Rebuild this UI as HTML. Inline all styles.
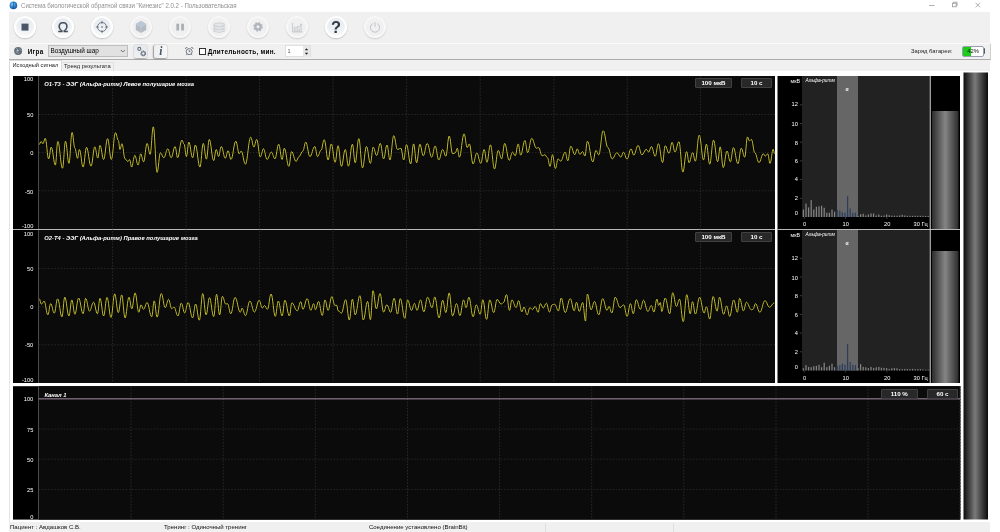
<!DOCTYPE html>
<html lang="ru"><head><meta charset="utf-8"><title>Кинезис</title>
<style>
*{box-sizing:border-box;margin:0;padding:0}
html,body{width:1000px;height:532px;overflow:hidden;background:#fff}
body{position:relative;font-family:"Liberation Sans","DejaVu Sans",sans-serif;font-size:6px;color:#000}
.abs{position:absolute}
#win{position:absolute;left:9px;top:0;width:981px;height:532px;background:#fff}
#title{position:absolute;left:20.8px;top:1.5px;font-size:6.6px;color:#909090;white-space:nowrap;transform:scaleX(.925);transform-origin:0 0}
#tb1{position:absolute;left:9px;top:12px;width:981px;height:31px;background:#f0f0f0}
#tb2{position:absolute;left:9px;top:42.5px;width:982px;height:17px;background:#f0f0f0;border-top:1px solid #fafafa;border-bottom:1px solid #adadad;border-right:1px solid #cfcfcf}
#tabs{position:absolute;left:9px;top:60px;width:981px;height:11px;background:#f0f0f0}
#status{position:absolute;left:9px;top:522px;width:981px;height:10px;background:#f0f0f0}
.rb{position:absolute;top:15.7px;width:22px;height:22px;border-radius:50%;background:linear-gradient(180deg,#e4e8ed 0%,#edf0f3 50%,#f8f9fa 100%);box-shadow:inset 0 0 1.2px 2.1px #fff,0 .9px 1.6px rgba(0,0,0,.2),0 0 .8px rgba(0,0,0,.08)}
.rb.dis{background:#f0f0f0;box-shadow:inset 0 0 1px 1.8px #f8f8f8,0 .9px 1.6px rgba(0,0,0,.15),0 0 .8px rgba(0,0,0,.06)}
.rb svg{position:absolute;left:0;top:0}
.t{position:absolute;white-space:nowrap}
.lab{position:absolute;color:#fff;font-size:5.7px;text-align:right;white-space:nowrap}
.ctitle{position:absolute;color:#fff;font-size:5.85px;font-style:italic;font-weight:bold;white-space:nowrap}
.btn{position:absolute;background:#282828;border:1px solid #414141;border-radius:1px;color:#fff;font-size:6.2px;font-weight:bold;text-align:center;line-height:8.2px;height:10px;white-space:nowrap}
svg{display:block}
</style></head><body><div id="root" style="position:absolute;left:0;top:0;width:1000px;height:532px;will-change:transform;transform:translateZ(0)">
<div id="win"></div>
<!-- title bar -->
<svg class="abs" style="left:9.4px;top:1.3px" width="9" height="9" viewBox="0 0 9 9"><defs><radialGradient id="ig" cx=".4" cy=".35" r=".7"><stop offset="0" stop-color="#8fd0f5"/><stop offset=".5" stop-color="#2f86d2"/><stop offset="1" stop-color="#17509c"/></radialGradient></defs><circle cx="4.4" cy="4.4" r="3.8" fill="url(#ig)"/><path d="M4.4 .8v7.2" stroke="#1c4f8e" stroke-width=".7"/></svg>
<div id="title">Система биологической обратной связи "Кинезис" 2.0.2 - Пользовательская</div>
<svg class="abs" style="left:920px;top:0" width="70" height="12" viewBox="0 0 70 12"><g stroke="#8c8c8c" stroke-width=".7" fill="none"><path d="M9 5.5h5.5"/><rect x="32.5" y="3.2" width="3.6" height="3.6"/><path d="M33.5 3.2v-1h3.6v3.6h-1"/><path d="M55.5 2.8l4.6 4.6M60.1 2.8l-4.6 4.6"/></g></svg>

<!-- toolbar 1 -->
<div id="tb1"></div>
<div class="rb" style="left:13.50px"><svg width="22" height="22"><rect x="7.5" y="7.6" width="7" height="7" fill="#4a5567"/></svg></div>
<div class="rb" style="left:52.45px"><svg width="22" height="22"><text x="11" y="16.2" text-anchor="middle" font-family="Liberation Sans,sans-serif" font-size="14.2" fill="#414b59" stroke="#414b59" stroke-width=".25">Ω</text></svg></div>
<div class="rb" style="left:91.40px"><svg width="22" height="22"><g stroke="#4e5866" stroke-width=".75" fill="none"><circle cx="11" cy="11" r="4.5"/><path d="M11 4.9v2.9M11 14.2v2.9M4.9 11h2.9M14.2 11h2.9"/></g><circle cx="11" cy="11" r=".8" fill="#4e5866"/></svg></div>
<div class="rb dis" style="left:130.35px"><svg width="22" height="22"><path d="M11 5l5.2 3v6L11 17l-5.2-3V8z" fill="#b3bac1"/><path d="M11 5l5.2 3L11 11 5.8 8z" fill="#b9c8d6"/><path d="M11 11v6M11 11l5.2-3M11 11L5.8 8" stroke="#cdd3d9" stroke-width=".5" fill="none"/></svg></div>
<div class="rb dis" style="left:169.30px"><svg width="22" height="22"><rect x="7.4" y="7.7" width="2.7" height="6.8" fill="#a9adb4"/><rect x="12.2" y="7.7" width="2.7" height="6.8" fill="#a9adb4"/></svg></div>
<div class="rb dis" style="left:208.25px"><svg width="22" height="22"><g stroke="#c3c7cc" stroke-width=".7" fill="#e4e6e9"><path d="M5.8 13.6l5.5-1.2 5 1v1.8l-5 1.3-5.5-1.1z"/><path d="M5.8 10.8l5.5-1.2 5 1v1.8l-5 1.3-5.5-1.1z"/><path d="M5.8 8l5.5-1.2 5 1v1.8l-5 1.3L5.8 9.8z"/></g></svg></div>
<div class="rb dis" style="left:247.20px"><svg width="22" height="22"><circle cx="11" cy="10.8" r="2.7" fill="none" stroke="#b1b5be" stroke-width="2.3"/><circle cx="11" cy="10.8" r="4" fill="none" stroke="#b1b5be" stroke-width="1.6" stroke-dasharray="1.6 1.54"/></svg></div>
<div class="rb dis" style="left:286.15px"><svg width="22" height="22"><g stroke="#b7bbc1" stroke-width=".7" fill="none"><path d="M6.5 7v9h10"/><path d="M8.3 16v-4.5M10 16v-3.2M11.7 16v-4.8M13.4 16v-3.5M15.1 16v-6"/><path d="M8.3 10.8l1.7 1.2 1.7-1.8 1.7 1 1.9-2.7"/><path d="M14 8.3l1.5-.2.2 1.5"/></g></svg></div>
<div class="rb" style="left:325.10px"><svg width="22" height="22"><text x="11" y="16.8" text-anchor="middle" font-family="Liberation Sans,sans-serif" font-weight="bold" font-size="16.4" fill="#2f3742">?</text></svg></div>
<div class="rb dis" style="left:364.05px"><svg width="22" height="22"><g stroke="#b3b6bb" stroke-width=".8" fill="none"><path d="M8.84 7.54A4.6 4.6 0 1 0 13.16 7.54"/><path d="M11 6.2v4.7"/></g></svg></div>

<!-- toolbar 2 -->
<div id="tb2"></div>
<svg class="abs" style="left:14px;top:46px" width="10" height="10"><circle cx="4.1" cy="4.9" r="4" fill="#626d7a"/><circle cx="3.6" cy="4.6" r="1" fill="#c9ced4"/><path d="M1.5 6.5l1.8-.6 1.2 1.9M5.3 2.4l1.3 1.9 1 .2M2 2.8l1.5-.8" stroke="#a3adb7" stroke-width=".7" fill="none"/></svg>
<div class="t" style="left:27.8px;top:47.7px;font-size:6.3px;font-weight:bold;letter-spacing:.3px">Игра</div>
<div class="abs" style="left:48.3px;top:45.3px;width:79.4px;height:12px;background:#e1e1e1;border:.8px solid #bdbdbd"></div>
<div class="t" style="left:50.5px;top:47.3px;font-size:6.4px">Воздушный шар</div>
<svg class="abs" style="left:120px;top:49px" width="6" height="5"><path d="M.8 1l2 2 2-2" stroke="#444" stroke-width=".7" fill="none"/></svg>
<div class="abs" style="left:133.5px;top:44.7px;width:13.2px;height:13px;border-radius:2.5px;background:linear-gradient(180deg,#e6e8ea,#f0f1f2);box-shadow:0 .6px 1.6px rgba(0,0,0,.3),0 0 1px rgba(0,0,0,.12)"></div>
<svg class="abs" style="left:133.5px;top:44.5px" width="14" height="14"><circle cx="5.3" cy="3.9" r="1.5" fill="#f4f5f6" stroke="#667283" stroke-width="1.1"/><circle cx="9.3" cy="8.5" r="2.1" fill="#f4f5f6" stroke="#667283" stroke-width="1.6" stroke-dasharray="1.2 .45"/><circle cx="9.3" cy="8.5" r="1.6" fill="none" stroke="#667283" stroke-width=".6"/></svg>
<div class="abs" style="left:153.7px;top:44.7px;width:13.1px;height:13px;border-radius:2.5px;background:linear-gradient(90deg,#eceeef,#f8f8f9);box-shadow:-.5px .7px 1.6px rgba(0,0,0,.38),0 0 1px rgba(0,0,0,.12)"></div>
<div class="t" style="left:159.2px;top:45px;font-family:'Liberation Serif',serif;font-style:italic;font-weight:bold;font-size:11.5px;color:#4a5363">i</div>
<svg class="abs" style="left:184px;top:46px" width="11" height="10"><g stroke="#59616e" stroke-width=".85" fill="none"><circle cx="5.2" cy="5.6" r="3"/><path d="M5.2 4v1.7h1.1M3 8.2l-.7.9M7.4 8.2l.7.9"/></g><path d="M1 3.2a2 2 0 0 1 2.7-2.1zM9.4 3.2a2 2 0 0 0-2.7-2.1z" fill="#59616e"/></svg>
<div class="abs" style="left:199.3px;top:48.2px;width:6.9px;height:6.5px;background:#fff;border:.7px solid #333"></div>
<div class="t" style="left:207.7px;top:47.9px;font-size:6.4px;font-weight:bold;letter-spacing:.27px">Длительность, мин.</div>
<div class="abs" style="left:285px;top:45px;width:25.5px;height:12px;background:#fff;border:1px solid #e0e0e0"></div>
<div class="t" style="left:287.5px;top:48px;font-size:5.5px;color:#555">1</div>
<svg class="abs" style="left:302.5px;top:45.5px" width="7" height="11"><rect x="0" y="0" width="7" height="11" fill="#e8e8e8"/><path d="M1.8 4.2l1.7-2 1.7 2zM1.8 6.8l1.7 2 1.7-2z" fill="#222"/></svg>
<div class="t" style="left:911px;top:47.7px;font-size:5.8px;color:#222">Заряд батареи:</div>
<div class="abs" style="left:962px;top:45.5px;width:21.5px;height:11px;border:.9px solid #98a0ae;border-radius:2px;background:linear-gradient(90deg,#1acd1a 0,#1acd1a 41%,#fff 41%)"></div>
<div class="abs" style="left:983.5px;top:48px;width:1.5px;height:5.5px;background:#4f5a6e;border-radius:0 1px 1px 0"></div>
<div class="t" style="left:967.3px;top:47.8px;font-size:5.8px;color:#111">42%</div>

<!-- tabs -->
<div id="tabs"></div>
<div class="abs" style="left:9px;top:60px;width:52.5px;height:12px;background:#fff;border:1px solid #dcdcdc;border-bottom:none"></div>
<div class="abs" style="left:61.5px;top:61.5px;width:52px;height:9.5px;border:1px solid #e0e0e0;border-left:none;border-bottom:none"></div>
<div class="t" style="left:12.5px;top:61.5px;font-size:5.7px;color:#222">Исходный сигнал</div>
<div class="t" style="left:64px;top:62.8px;font-size:5.75px;color:#222">Тренд результата</div>
<div class="abs" style="left:9px;top:71px;width:981px;height:451px;background:#fff;border-left:1px solid #e6e6e6"></div>

<!-- main chart SVG -->
<svg class="abs" style="left:0;top:0" width="1000" height="532" viewBox="0 0 1000 532">
<defs>
<linearGradient id="lv" x1="0" x2="1" y1="0" y2="0"><stop offset="0" stop-color="#2c2c2c"/><stop offset=".5" stop-color="#858585"/><stop offset="1" stop-color="#2c2c2c"/></linearGradient>
<linearGradient id="big" x1="0" x2="1" y1="0" y2="0"><stop offset="0" stop-color="#0c0c0c"/><stop offset=".47" stop-color="#7a7a7a"/><stop offset="1" stop-color="#0c0c0c"/></linearGradient>
</defs>
<!-- chart 1 & 2 -->
<rect x="13" y="76" width="762" height="307" fill="#000"/>
<rect x="39" y="76" width="736" height="307" fill="#0b0b0b"/>
<rect x="38" y="76" width="1" height="307" fill="#4a4a4a"/>
<rect x="13" y="229" width="762" height="1" fill="#b8b8b8"/>
<g stroke="#2b2b2b" stroke-width="1" stroke-dasharray="1.5 1.6" fill="none">
<path d="M112.6 76V383M186.1 76V383M259.6 76V383M333.1 76V383M406.6 76V383M480.2 76V383M553.9 76V383M627.2 76V383M700.6 76V383"/>
<path stroke="#272727" d="M39 114.5H775M39 152.6H775M39 190.8H775M39 268.4H775M39 306.6H775M39 344.8H775"/>
</g>
<path d="M39.2 144.6 C39.9 144.6 40.3 141.4 41.1 141.4 C41.8 141.4 42.2 143.7 43.0 143.7 C43.9 143.7 44.3 138.3 45.2 138.3 C46.6 138.3 47.3 158.9 48.6 158.9 C49.7 158.9 50.2 147.1 51.2 147.1 C52.9 147.1 53.7 165.1 55.4 165.1 C56.3 165.1 56.8 141.4 57.8 141.4 C59.7 141.4 60.6 168.2 62.5 168.2 C63.7 168.2 64.3 141.2 65.5 141.2 C66.9 141.2 67.6 163.4 68.9 163.4 C70.2 163.4 70.8 132.4 72.1 132.4 C73.2 132.4 73.8 148.2 74.9 148.2 C75.9 148.2 76.5 158.3 77.5 158.3 C78.3 158.3 78.6 149.5 79.4 149.5 C80.9 149.5 81.6 167.1 83.1 167.1 C84.5 167.1 85.2 147.3 86.5 147.3 C88.3 147.3 89.2 166.2 91.0 166.2 C92.6 166.2 93.3 146.8 94.8 146.8 C96.0 146.8 96.6 158.1 97.8 158.1 C98.7 158.1 99.1 145.4 100.0 145.4 C101.5 145.4 102.2 159.5 103.6 159.5 C105.2 159.5 106.0 138.6 107.6 138.6 C109.1 138.6 109.8 159.5 111.3 159.5 C113.0 159.5 113.8 132.6 115.5 132.6 C116.6 132.6 117.2 140.3 118.3 140.3 C119.0 140.3 119.3 149.5 120.0 149.5 C120.8 149.5 121.1 143.7 121.9 143.7 C123.2 143.7 123.8 158.9 125.1 158.9 C126.2 158.9 126.8 161.5 127.9 161.5 C128.6 161.5 128.9 159.5 129.6 159.5 C130.4 159.5 130.8 167.1 131.6 167.1 C132.8 167.1 133.4 156.1 134.7 156.1 C134.7 156.1 134.7 155.2 134.7 155.2 C136.1 155.2 136.8 165.1 138.1 165.1 C139.2 165.1 139.7 153.8 140.7 153.8 C141.8 153.8 142.4 161.9 143.5 161.9 C145.0 161.9 145.7 143.4 147.1 143.4 C148.3 143.4 148.9 154.4 150.1 154.4 C151.4 154.4 152.0 126.8 153.3 126.8 C154.8 126.8 155.6 172.4 157.1 172.4 C158.4 172.4 159.1 152.7 160.4 152.7 C161.8 152.7 162.5 157.8 163.8 157.8 C165.4 157.8 166.2 148.8 167.8 148.8 C169.1 148.8 169.8 157.8 171.2 157.8 C172.7 157.8 173.5 146.5 175.1 146.5 C176.1 146.5 176.6 157.8 177.6 157.8 C179.3 157.8 180.1 140.1 181.9 140.1 C182.8 140.1 183.2 144.2 184.1 144.2 C185.0 144.2 185.5 156.6 186.4 156.6 C187.4 156.6 187.9 142.0 188.8 142.0 C190.3 142.0 191.1 157.8 192.6 157.8 C193.7 157.8 194.3 145.0 195.4 145.0 C197.2 145.0 198.1 167.1 199.9 167.1 C201.3 167.1 201.9 143.4 203.3 143.4 C204.5 143.4 205.2 159.2 206.4 159.2 C207.6 159.2 208.1 139.4 209.3 139.4 C211.0 139.4 211.9 160.6 213.7 160.6 C214.7 160.6 215.2 149.5 216.2 149.5 C217.2 149.5 217.6 156.6 218.5 156.6 C219.6 156.6 220.2 146.5 221.3 146.5 C222.9 146.5 223.7 158.3 225.3 158.3 C226.4 158.3 227.0 150.7 228.1 150.7 C229.2 150.7 229.8 159.5 231.0 159.5 C232.9 159.5 233.9 141.2 235.8 141.2 C237.2 141.2 237.9 153.8 239.2 153.8 C240.0 153.8 240.4 151.0 241.1 151.0 C242.9 151.0 243.7 164.2 245.4 164.2 C247.5 164.2 248.6 137.1 250.7 137.1 C252.0 137.1 252.6 147.1 253.9 147.1 C255.0 147.1 255.6 139.4 256.7 139.4 C258.1 139.4 258.9 157.0 260.3 157.0 C261.6 157.0 262.2 148.8 263.5 148.8 C264.9 148.8 265.6 159.5 267.1 159.5 C268.8 159.5 269.6 152.1 271.4 152.1 C272.8 152.1 273.5 158.9 275.0 158.9 C276.4 158.9 277.2 144.2 278.7 144.2 C280.0 144.2 280.7 159.5 282.1 159.5 C283.0 159.5 283.4 148.2 284.3 148.2 C286.1 148.2 287.0 166.4 288.8 166.4 C290.0 166.4 290.5 151.6 291.6 151.6 C293.4 151.6 294.3 161.5 296.1 161.5 C297.3 161.5 297.8 156.6 299.0 156.6 C300.6 156.6 301.3 151.0 302.9 151.0 C304.0 151.0 304.6 142.0 305.7 142.0 C307.4 142.0 308.2 156.6 309.9 156.6 C311.9 156.6 312.8 146.5 314.8 146.5 C315.9 146.5 316.4 156.6 317.6 156.6 C318.9 156.6 319.6 150.4 321.0 150.4 C322.3 150.4 322.9 139.7 324.2 139.7 C325.8 139.7 326.6 160.0 328.1 160.0 C329.4 160.0 330.0 143.9 331.3 143.9 C332.8 143.9 333.6 162.3 335.1 162.3 C336.3 162.3 336.9 145.7 338.1 145.7 C339.4 145.7 340.1 166.4 341.4 166.4 C343.0 166.4 343.7 149.5 345.3 149.5 C346.5 149.5 347.2 166.2 348.4 166.2 C350.0 166.2 350.8 144.2 352.4 144.2 C353.5 144.2 354.1 162.8 355.2 162.8 C356.6 162.8 357.4 138.6 358.8 138.6 C360.3 138.6 361.0 167.9 362.5 167.9 C364.1 167.9 364.9 146.5 366.5 146.5 C368.1 146.5 368.8 163.4 370.4 163.4 C371.5 163.4 372.1 147.1 373.2 147.1 C374.6 147.1 375.3 155.5 376.6 155.5 C378.1 155.5 378.9 143.4 380.3 143.4 C381.6 143.4 382.3 158.9 383.6 158.9 C385.0 158.9 385.6 145.0 387.0 145.0 C388.2 145.0 388.8 160.0 389.9 160.0 C391.5 160.0 392.2 135.6 393.8 135.6 C395.2 135.6 396.0 149.5 397.5 149.5 C398.8 149.5 399.5 148.2 400.9 148.2 C402.0 148.2 402.6 160.0 403.7 160.0 C404.8 160.0 405.4 144.6 406.5 144.6 C408.2 144.6 409.0 164.0 410.7 164.0 C411.8 164.0 412.4 143.9 413.6 143.9 C414.8 143.9 415.4 162.8 416.6 162.8 C417.9 162.8 418.6 144.2 419.9 144.2 C421.2 144.2 421.9 155.8 423.3 155.8 C424.9 155.8 425.6 143.4 427.2 143.4 C429.0 143.4 429.9 157.2 431.7 157.2 C433.1 157.2 433.8 145.9 435.1 145.9 C436.6 145.9 437.3 160.0 438.8 160.0 C440.4 160.0 441.1 149.5 442.7 149.5 C443.9 149.5 444.6 156.3 445.8 156.3 C447.2 156.3 447.8 136.0 449.2 136.0 C450.6 136.0 451.2 153.8 452.6 153.8 C453.7 153.8 454.3 152.7 455.4 152.7 C456.2 152.7 456.6 148.2 457.3 148.2 C458.1 148.2 458.5 157.2 459.4 157.2 C461.2 157.2 462.2 133.8 464.1 133.8 C465.3 133.8 466.0 147.6 467.2 147.6 C468.1 147.6 468.5 143.9 469.3 143.9 C470.8 143.9 471.6 164.0 473.1 164.0 C474.6 164.0 475.3 152.9 476.8 152.9 C478.4 152.9 479.2 163.4 480.8 163.4 C482.1 163.4 482.8 149.5 484.1 149.5 C485.3 149.5 485.8 162.3 487.0 162.3 C488.3 162.3 489.0 144.8 490.4 144.8 C492.0 144.8 492.9 169.0 494.5 169.0 C496.0 169.0 496.8 150.4 498.2 150.4 C499.6 150.4 500.3 158.9 501.6 158.9 C502.8 158.9 503.5 143.4 504.7 143.4 C506.5 143.4 507.4 160.4 509.2 160.4 C510.5 160.4 511.2 152.1 512.5 152.1 C513.6 152.1 514.2 155.8 515.2 155.8 C516.4 155.8 517.0 143.9 518.2 143.9 C519.2 143.9 519.7 155.2 520.7 155.2 C522.4 155.2 523.2 140.5 524.9 140.5 C526.0 140.5 526.6 152.7 527.6 152.7 C529.3 152.7 530.1 138.3 531.7 138.3 C533.6 138.3 534.5 148.2 536.4 148.2 C537.3 148.2 537.8 147.6 538.7 147.6 C540.0 147.6 540.7 155.8 542.1 155.8 C543.2 155.8 543.8 154.7 544.9 154.7 C545.9 154.7 546.5 157.8 547.5 157.8 C548.5 157.8 549.0 166.4 550.0 166.4 C551.0 166.4 551.5 154.7 552.5 154.7 C553.6 154.7 554.2 168.5 555.4 168.5 C556.5 168.5 557.0 158.9 558.1 158.9 C559.1 158.9 559.6 161.2 560.7 161.2 C562.5 161.2 563.4 152.1 565.2 152.1 C566.2 152.1 566.7 160.8 567.8 160.8 C569.0 160.8 569.6 146.2 570.8 146.2 C572.4 146.2 573.2 154.7 574.8 154.7 C575.8 154.7 576.3 148.8 577.2 148.8 C578.3 148.8 578.8 154.4 579.8 154.4 C581.0 154.4 581.5 151.6 582.7 151.6 C583.6 151.6 584.0 156.1 584.9 156.1 C585.9 156.1 586.4 141.2 587.4 141.2 C589.6 141.2 590.6 161.9 592.8 161.9 C594.1 161.9 594.7 150.4 596.0 150.4 C597.0 150.4 597.6 154.9 598.7 154.9 C600.5 154.9 601.4 130.7 603.2 130.7 C605.1 130.7 606.0 147.6 607.9 147.6 C609.6 147.6 610.5 158.9 612.2 158.9 C614.1 158.9 615.0 152.7 616.9 152.7 C618.5 152.7 619.3 157.2 620.9 157.2 C621.9 157.2 622.4 152.1 623.5 152.1 C624.9 152.1 625.6 159.2 627.1 159.2 C628.6 159.2 629.4 148.8 631.0 148.8 C632.1 148.8 632.7 155.2 633.8 155.2 C635.5 155.2 636.4 145.4 638.1 145.4 C639.6 145.4 640.4 154.9 641.9 154.9 C643.7 154.9 644.5 149.3 646.2 149.3 C647.2 149.3 647.7 152.1 648.7 152.1 C649.7 152.1 650.3 146.5 651.3 146.5 C652.9 146.5 653.7 156.3 655.2 156.3 C656.5 156.3 657.1 143.7 658.4 143.7 C660.1 143.7 660.9 162.6 662.6 162.6 C663.6 162.6 664.1 145.7 665.2 145.7 C666.7 145.7 667.5 153.3 669.0 153.3 C670.3 153.3 670.9 142.3 672.1 142.3 C673.3 142.3 673.8 152.1 675.0 152.1 C676.5 152.1 677.3 141.7 678.9 141.7 C680.5 141.7 681.3 172.1 682.9 172.1 C684.3 172.1 685.1 151.6 686.6 151.6 C687.6 151.6 688.1 162.8 689.1 162.8 C690.5 162.8 691.2 152.7 692.7 152.7 C693.7 152.7 694.2 161.2 695.3 161.2 C696.9 161.2 697.6 135.2 699.2 135.2 C701.0 135.2 701.8 160.0 703.5 160.0 C704.7 160.0 705.2 144.2 706.4 144.2 C707.7 144.2 708.4 164.2 709.7 164.2 C711.2 164.2 712.0 140.1 713.5 140.1 C715.1 140.1 716.0 161.7 717.6 161.7 C718.7 161.7 719.2 146.8 720.2 146.8 C721.4 146.8 722.0 167.6 723.3 167.6 C724.7 167.6 725.5 151.0 727.0 151.0 C728.3 151.0 729.0 161.9 730.4 161.9 C731.6 161.9 732.2 147.6 733.4 147.6 C735.2 147.6 736.1 163.7 737.9 163.7 C739.3 163.7 739.9 148.2 741.3 148.2 C742.7 148.2 743.3 157.2 744.7 157.2 C745.8 157.2 746.4 136.9 747.5 136.9 C748.3 136.9 748.7 140.9 749.5 140.9 C750.3 140.9 750.7 139.4 751.4 139.4 C752.8 139.4 753.5 152.7 754.8 152.7 C756.5 152.7 757.3 162.6 759.0 162.6 C760.7 162.6 761.6 153.8 763.3 153.8 C764.1 153.8 764.5 156.1 765.3 156.1 C766.3 156.1 766.8 153.8 767.8 153.8 C768.7 153.8 769.1 163.4 770.0 163.4 C771.3 163.4 771.9 149.3 773.2 149.3 C773.7 149.3 774.0 153.8 774.5 153.8" fill="none" stroke="#000" stroke-width="2" stroke-linejoin="round"/>
<path d="M39.2 144.6 C39.9 144.6 40.3 141.4 41.1 141.4 C41.8 141.4 42.2 143.7 43.0 143.7 C43.9 143.7 44.3 138.3 45.2 138.3 C46.6 138.3 47.3 158.9 48.6 158.9 C49.7 158.9 50.2 147.1 51.2 147.1 C52.9 147.1 53.7 165.1 55.4 165.1 C56.3 165.1 56.8 141.4 57.8 141.4 C59.7 141.4 60.6 168.2 62.5 168.2 C63.7 168.2 64.3 141.2 65.5 141.2 C66.9 141.2 67.6 163.4 68.9 163.4 C70.2 163.4 70.8 132.4 72.1 132.4 C73.2 132.4 73.8 148.2 74.9 148.2 C75.9 148.2 76.5 158.3 77.5 158.3 C78.3 158.3 78.6 149.5 79.4 149.5 C80.9 149.5 81.6 167.1 83.1 167.1 C84.5 167.1 85.2 147.3 86.5 147.3 C88.3 147.3 89.2 166.2 91.0 166.2 C92.6 166.2 93.3 146.8 94.8 146.8 C96.0 146.8 96.6 158.1 97.8 158.1 C98.7 158.1 99.1 145.4 100.0 145.4 C101.5 145.4 102.2 159.5 103.6 159.5 C105.2 159.5 106.0 138.6 107.6 138.6 C109.1 138.6 109.8 159.5 111.3 159.5 C113.0 159.5 113.8 132.6 115.5 132.6 C116.6 132.6 117.2 140.3 118.3 140.3 C119.0 140.3 119.3 149.5 120.0 149.5 C120.8 149.5 121.1 143.7 121.9 143.7 C123.2 143.7 123.8 158.9 125.1 158.9 C126.2 158.9 126.8 161.5 127.9 161.5 C128.6 161.5 128.9 159.5 129.6 159.5 C130.4 159.5 130.8 167.1 131.6 167.1 C132.8 167.1 133.4 156.1 134.7 156.1 C134.7 156.1 134.7 155.2 134.7 155.2 C136.1 155.2 136.8 165.1 138.1 165.1 C139.2 165.1 139.7 153.8 140.7 153.8 C141.8 153.8 142.4 161.9 143.5 161.9 C145.0 161.9 145.7 143.4 147.1 143.4 C148.3 143.4 148.9 154.4 150.1 154.4 C151.4 154.4 152.0 126.8 153.3 126.8 C154.8 126.8 155.6 172.4 157.1 172.4 C158.4 172.4 159.1 152.7 160.4 152.7 C161.8 152.7 162.5 157.8 163.8 157.8 C165.4 157.8 166.2 148.8 167.8 148.8 C169.1 148.8 169.8 157.8 171.2 157.8 C172.7 157.8 173.5 146.5 175.1 146.5 C176.1 146.5 176.6 157.8 177.6 157.8 C179.3 157.8 180.1 140.1 181.9 140.1 C182.8 140.1 183.2 144.2 184.1 144.2 C185.0 144.2 185.5 156.6 186.4 156.6 C187.4 156.6 187.9 142.0 188.8 142.0 C190.3 142.0 191.1 157.8 192.6 157.8 C193.7 157.8 194.3 145.0 195.4 145.0 C197.2 145.0 198.1 167.1 199.9 167.1 C201.3 167.1 201.9 143.4 203.3 143.4 C204.5 143.4 205.2 159.2 206.4 159.2 C207.6 159.2 208.1 139.4 209.3 139.4 C211.0 139.4 211.9 160.6 213.7 160.6 C214.7 160.6 215.2 149.5 216.2 149.5 C217.2 149.5 217.6 156.6 218.5 156.6 C219.6 156.6 220.2 146.5 221.3 146.5 C222.9 146.5 223.7 158.3 225.3 158.3 C226.4 158.3 227.0 150.7 228.1 150.7 C229.2 150.7 229.8 159.5 231.0 159.5 C232.9 159.5 233.9 141.2 235.8 141.2 C237.2 141.2 237.9 153.8 239.2 153.8 C240.0 153.8 240.4 151.0 241.1 151.0 C242.9 151.0 243.7 164.2 245.4 164.2 C247.5 164.2 248.6 137.1 250.7 137.1 C252.0 137.1 252.6 147.1 253.9 147.1 C255.0 147.1 255.6 139.4 256.7 139.4 C258.1 139.4 258.9 157.0 260.3 157.0 C261.6 157.0 262.2 148.8 263.5 148.8 C264.9 148.8 265.6 159.5 267.1 159.5 C268.8 159.5 269.6 152.1 271.4 152.1 C272.8 152.1 273.5 158.9 275.0 158.9 C276.4 158.9 277.2 144.2 278.7 144.2 C280.0 144.2 280.7 159.5 282.1 159.5 C283.0 159.5 283.4 148.2 284.3 148.2 C286.1 148.2 287.0 166.4 288.8 166.4 C290.0 166.4 290.5 151.6 291.6 151.6 C293.4 151.6 294.3 161.5 296.1 161.5 C297.3 161.5 297.8 156.6 299.0 156.6 C300.6 156.6 301.3 151.0 302.9 151.0 C304.0 151.0 304.6 142.0 305.7 142.0 C307.4 142.0 308.2 156.6 309.9 156.6 C311.9 156.6 312.8 146.5 314.8 146.5 C315.9 146.5 316.4 156.6 317.6 156.6 C318.9 156.6 319.6 150.4 321.0 150.4 C322.3 150.4 322.9 139.7 324.2 139.7 C325.8 139.7 326.6 160.0 328.1 160.0 C329.4 160.0 330.0 143.9 331.3 143.9 C332.8 143.9 333.6 162.3 335.1 162.3 C336.3 162.3 336.9 145.7 338.1 145.7 C339.4 145.7 340.1 166.4 341.4 166.4 C343.0 166.4 343.7 149.5 345.3 149.5 C346.5 149.5 347.2 166.2 348.4 166.2 C350.0 166.2 350.8 144.2 352.4 144.2 C353.5 144.2 354.1 162.8 355.2 162.8 C356.6 162.8 357.4 138.6 358.8 138.6 C360.3 138.6 361.0 167.9 362.5 167.9 C364.1 167.9 364.9 146.5 366.5 146.5 C368.1 146.5 368.8 163.4 370.4 163.4 C371.5 163.4 372.1 147.1 373.2 147.1 C374.6 147.1 375.3 155.5 376.6 155.5 C378.1 155.5 378.9 143.4 380.3 143.4 C381.6 143.4 382.3 158.9 383.6 158.9 C385.0 158.9 385.6 145.0 387.0 145.0 C388.2 145.0 388.8 160.0 389.9 160.0 C391.5 160.0 392.2 135.6 393.8 135.6 C395.2 135.6 396.0 149.5 397.5 149.5 C398.8 149.5 399.5 148.2 400.9 148.2 C402.0 148.2 402.6 160.0 403.7 160.0 C404.8 160.0 405.4 144.6 406.5 144.6 C408.2 144.6 409.0 164.0 410.7 164.0 C411.8 164.0 412.4 143.9 413.6 143.9 C414.8 143.9 415.4 162.8 416.6 162.8 C417.9 162.8 418.6 144.2 419.9 144.2 C421.2 144.2 421.9 155.8 423.3 155.8 C424.9 155.8 425.6 143.4 427.2 143.4 C429.0 143.4 429.9 157.2 431.7 157.2 C433.1 157.2 433.8 145.9 435.1 145.9 C436.6 145.9 437.3 160.0 438.8 160.0 C440.4 160.0 441.1 149.5 442.7 149.5 C443.9 149.5 444.6 156.3 445.8 156.3 C447.2 156.3 447.8 136.0 449.2 136.0 C450.6 136.0 451.2 153.8 452.6 153.8 C453.7 153.8 454.3 152.7 455.4 152.7 C456.2 152.7 456.6 148.2 457.3 148.2 C458.1 148.2 458.5 157.2 459.4 157.2 C461.2 157.2 462.2 133.8 464.1 133.8 C465.3 133.8 466.0 147.6 467.2 147.6 C468.1 147.6 468.5 143.9 469.3 143.9 C470.8 143.9 471.6 164.0 473.1 164.0 C474.6 164.0 475.3 152.9 476.8 152.9 C478.4 152.9 479.2 163.4 480.8 163.4 C482.1 163.4 482.8 149.5 484.1 149.5 C485.3 149.5 485.8 162.3 487.0 162.3 C488.3 162.3 489.0 144.8 490.4 144.8 C492.0 144.8 492.9 169.0 494.5 169.0 C496.0 169.0 496.8 150.4 498.2 150.4 C499.6 150.4 500.3 158.9 501.6 158.9 C502.8 158.9 503.5 143.4 504.7 143.4 C506.5 143.4 507.4 160.4 509.2 160.4 C510.5 160.4 511.2 152.1 512.5 152.1 C513.6 152.1 514.2 155.8 515.2 155.8 C516.4 155.8 517.0 143.9 518.2 143.9 C519.2 143.9 519.7 155.2 520.7 155.2 C522.4 155.2 523.2 140.5 524.9 140.5 C526.0 140.5 526.6 152.7 527.6 152.7 C529.3 152.7 530.1 138.3 531.7 138.3 C533.6 138.3 534.5 148.2 536.4 148.2 C537.3 148.2 537.8 147.6 538.7 147.6 C540.0 147.6 540.7 155.8 542.1 155.8 C543.2 155.8 543.8 154.7 544.9 154.7 C545.9 154.7 546.5 157.8 547.5 157.8 C548.5 157.8 549.0 166.4 550.0 166.4 C551.0 166.4 551.5 154.7 552.5 154.7 C553.6 154.7 554.2 168.5 555.4 168.5 C556.5 168.5 557.0 158.9 558.1 158.9 C559.1 158.9 559.6 161.2 560.7 161.2 C562.5 161.2 563.4 152.1 565.2 152.1 C566.2 152.1 566.7 160.8 567.8 160.8 C569.0 160.8 569.6 146.2 570.8 146.2 C572.4 146.2 573.2 154.7 574.8 154.7 C575.8 154.7 576.3 148.8 577.2 148.8 C578.3 148.8 578.8 154.4 579.8 154.4 C581.0 154.4 581.5 151.6 582.7 151.6 C583.6 151.6 584.0 156.1 584.9 156.1 C585.9 156.1 586.4 141.2 587.4 141.2 C589.6 141.2 590.6 161.9 592.8 161.9 C594.1 161.9 594.7 150.4 596.0 150.4 C597.0 150.4 597.6 154.9 598.7 154.9 C600.5 154.9 601.4 130.7 603.2 130.7 C605.1 130.7 606.0 147.6 607.9 147.6 C609.6 147.6 610.5 158.9 612.2 158.9 C614.1 158.9 615.0 152.7 616.9 152.7 C618.5 152.7 619.3 157.2 620.9 157.2 C621.9 157.2 622.4 152.1 623.5 152.1 C624.9 152.1 625.6 159.2 627.1 159.2 C628.6 159.2 629.4 148.8 631.0 148.8 C632.1 148.8 632.7 155.2 633.8 155.2 C635.5 155.2 636.4 145.4 638.1 145.4 C639.6 145.4 640.4 154.9 641.9 154.9 C643.7 154.9 644.5 149.3 646.2 149.3 C647.2 149.3 647.7 152.1 648.7 152.1 C649.7 152.1 650.3 146.5 651.3 146.5 C652.9 146.5 653.7 156.3 655.2 156.3 C656.5 156.3 657.1 143.7 658.4 143.7 C660.1 143.7 660.9 162.6 662.6 162.6 C663.6 162.6 664.1 145.7 665.2 145.7 C666.7 145.7 667.5 153.3 669.0 153.3 C670.3 153.3 670.9 142.3 672.1 142.3 C673.3 142.3 673.8 152.1 675.0 152.1 C676.5 152.1 677.3 141.7 678.9 141.7 C680.5 141.7 681.3 172.1 682.9 172.1 C684.3 172.1 685.1 151.6 686.6 151.6 C687.6 151.6 688.1 162.8 689.1 162.8 C690.5 162.8 691.2 152.7 692.7 152.7 C693.7 152.7 694.2 161.2 695.3 161.2 C696.9 161.2 697.6 135.2 699.2 135.2 C701.0 135.2 701.8 160.0 703.5 160.0 C704.7 160.0 705.2 144.2 706.4 144.2 C707.7 144.2 708.4 164.2 709.7 164.2 C711.2 164.2 712.0 140.1 713.5 140.1 C715.1 140.1 716.0 161.7 717.6 161.7 C718.7 161.7 719.2 146.8 720.2 146.8 C721.4 146.8 722.0 167.6 723.3 167.6 C724.7 167.6 725.5 151.0 727.0 151.0 C728.3 151.0 729.0 161.9 730.4 161.9 C731.6 161.9 732.2 147.6 733.4 147.6 C735.2 147.6 736.1 163.7 737.9 163.7 C739.3 163.7 739.9 148.2 741.3 148.2 C742.7 148.2 743.3 157.2 744.7 157.2 C745.8 157.2 746.4 136.9 747.5 136.9 C748.3 136.9 748.7 140.9 749.5 140.9 C750.3 140.9 750.7 139.4 751.4 139.4 C752.8 139.4 753.5 152.7 754.8 152.7 C756.5 152.7 757.3 162.6 759.0 162.6 C760.7 162.6 761.6 153.8 763.3 153.8 C764.1 153.8 764.5 156.1 765.3 156.1 C766.3 156.1 766.8 153.8 767.8 153.8 C768.7 153.8 769.1 163.4 770.0 163.4 C771.3 163.4 771.9 149.3 773.2 149.3 C773.7 149.3 774.0 153.8 774.5 153.8" fill="none" stroke="#cfc832" stroke-width=".95" stroke-linejoin="round"/>
<path d="M39.2 298.6 C40.1 298.6 40.5 304.2 41.4 304.2 C42.5 304.2 43.0 301.0 44.1 301.0 C45.6 301.0 46.4 314.9 47.8 314.9 C49.0 314.9 49.5 303.6 50.7 303.6 C52.1 303.6 52.8 313.2 54.3 313.2 C55.6 313.2 56.3 298.8 57.6 298.8 C59.4 298.8 60.2 316.8 61.9 316.8 C63.1 316.8 63.6 297.2 64.8 297.2 C66.4 297.2 67.3 316.0 68.9 316.0 C70.1 316.0 70.7 299.9 71.8 299.9 C73.1 299.9 73.7 314.3 74.9 314.3 C76.4 314.3 77.1 298.0 78.6 298.0 C80.4 298.0 81.3 313.8 83.1 313.8 C84.1 313.8 84.6 298.3 85.6 298.3 C87.2 298.3 88.0 311.2 89.5 311.2 C91.1 311.2 91.9 302.2 93.5 302.2 C95.1 302.2 95.9 313.8 97.4 313.8 C98.5 313.8 99.0 298.3 100.0 298.3 C101.5 298.3 102.2 316.0 103.6 316.0 C105.0 316.0 105.7 297.4 107.0 297.4 C108.6 297.4 109.4 317.5 111.0 317.5 C112.5 317.5 113.2 293.8 114.7 293.8 C116.1 293.8 116.9 312.6 118.3 312.6 C119.7 312.6 120.3 294.9 121.7 294.9 C123.0 294.9 123.7 317.9 125.1 317.9 C126.6 317.9 127.4 297.2 129.0 297.2 C130.1 297.2 130.7 308.9 131.8 308.9 C133.1 308.9 133.8 292.9 135.1 292.9 C136.6 292.9 137.3 312.3 138.8 312.3 C139.7 312.3 140.1 304.8 141.1 304.8 C142.0 304.8 142.5 309.3 143.5 309.3 C145.0 309.3 145.7 302.5 147.1 302.5 C148.9 302.5 149.8 316.8 151.7 316.8 C152.7 316.8 153.2 300.8 154.2 300.8 C155.4 300.8 155.9 317.1 157.1 317.1 C158.8 317.1 159.6 293.5 161.3 293.5 C162.9 293.5 163.6 307.6 165.2 307.6 C166.5 307.6 167.2 299.4 168.6 299.4 C169.8 299.4 170.5 308.7 171.7 308.7 C172.6 308.7 173.1 307.0 174.0 307.0 C175.5 307.0 176.3 316.0 177.9 316.0 C179.3 316.0 179.9 303.1 181.3 303.1 C182.7 303.1 183.3 313.0 184.7 313.0 C186.0 313.0 186.7 302.5 188.1 302.5 C189.9 302.5 190.8 317.9 192.6 317.9 C193.8 317.9 194.4 304.0 195.6 304.0 C197.1 304.0 197.8 320.2 199.3 320.2 C200.7 320.2 201.4 293.5 202.7 293.5 C204.1 293.5 204.7 314.9 206.1 314.9 C207.5 314.9 208.1 297.6 209.5 297.6 C211.1 297.6 212.0 316.6 213.7 316.6 C214.8 316.6 215.4 294.3 216.6 294.3 C217.8 294.3 218.4 314.9 219.6 314.9 C220.8 314.9 221.3 296.3 222.4 296.3 C223.8 296.3 224.5 304.2 225.8 304.2 C226.5 304.2 226.8 303.6 227.5 303.6 C228.8 303.6 229.5 313.8 230.8 313.8 C232.5 313.8 233.3 297.4 235.1 297.4 C237.2 297.4 238.2 312.3 240.3 312.3 C241.0 312.3 241.4 308.1 242.0 308.1 C243.4 308.1 244.1 315.7 245.4 315.7 C247.2 315.7 248.1 301.0 249.9 301.0 C251.7 301.0 252.6 312.1 254.4 312.1 C256.3 312.1 257.3 300.2 259.2 300.2 C260.4 300.2 261.1 308.1 262.3 308.1 C263.1 308.1 263.5 305.5 264.4 305.5 C265.6 305.5 266.2 309.3 267.4 309.3 C268.9 309.3 269.6 294.0 271.1 294.0 C272.8 294.0 273.6 316.4 275.3 316.4 C276.5 316.4 277.1 301.0 278.3 301.0 C279.8 301.0 280.6 316.0 282.1 316.0 C283.2 316.0 283.8 300.2 284.9 300.2 C286.7 300.2 287.6 316.0 289.4 316.0 C290.4 316.0 290.9 302.8 291.9 302.8 C294.0 302.8 295.1 310.9 297.3 310.9 C298.6 310.9 299.3 301.7 300.7 301.7 C301.6 301.7 302.0 309.3 302.9 309.3 C304.6 309.3 305.5 298.6 307.2 298.6 C308.6 298.6 309.4 310.4 310.8 310.4 C311.9 310.4 312.5 303.6 313.6 303.6 C314.4 303.6 314.8 309.8 315.5 309.8 C316.7 309.8 317.3 301.4 318.5 301.4 C320.0 301.4 320.8 315.5 322.3 315.5 C323.4 315.5 323.9 299.9 325.0 299.9 C326.3 299.9 326.9 310.4 328.1 310.4 C329.6 310.4 330.3 296.5 331.8 296.5 C333.0 296.5 333.6 305.5 334.9 305.5 C335.6 305.5 335.9 305.1 336.6 305.1 C337.3 305.1 337.6 310.9 338.3 310.9 C339.6 310.9 340.2 313.2 341.4 313.2 C343.1 313.2 344.0 299.7 345.6 299.7 C347.1 299.7 347.9 320.0 349.3 320.0 C350.6 320.0 351.2 299.1 352.4 299.1 C353.5 299.1 354.1 314.9 355.2 314.9 C357.1 314.9 358.0 295.7 359.9 295.7 C361.3 295.7 362.0 320.0 363.3 320.0 C365.0 320.0 365.9 301.4 367.6 301.4 C368.7 301.4 369.3 319.7 370.4 319.7 C371.5 319.7 372.0 290.7 373.0 290.7 C374.4 290.7 375.0 308.9 376.4 308.9 C377.8 308.9 378.6 293.5 380.0 293.5 C381.4 293.5 382.2 312.1 383.6 312.1 C384.9 312.1 385.5 304.8 386.8 304.8 C388.4 304.8 389.1 312.3 390.7 312.3 C392.1 312.3 392.7 298.3 394.1 298.3 C395.5 298.3 396.1 314.1 397.5 314.1 C398.6 314.1 399.2 298.6 400.3 298.6 C402.1 298.6 403.0 318.3 404.8 318.3 C405.9 318.3 406.5 299.9 407.6 299.9 C409.2 299.9 410.0 310.4 411.6 310.4 C412.7 310.4 413.3 303.3 414.4 303.3 C415.5 303.3 416.0 310.4 417.1 310.4 C418.4 310.4 419.1 299.9 420.5 299.9 C421.8 299.9 422.5 311.9 423.8 311.9 C425.3 311.9 426.1 297.2 427.6 297.2 C429.4 297.2 430.3 307.8 432.1 307.8 C433.1 307.8 433.7 296.9 434.8 296.9 C436.5 296.9 437.3 317.9 439.1 317.9 C440.5 317.9 441.2 300.2 442.7 300.2 C443.9 300.2 444.6 312.6 445.8 312.6 C447.2 312.6 447.8 292.9 449.2 292.9 C450.6 292.9 451.2 316.0 452.6 316.0 C454.2 316.0 455.0 303.6 456.5 303.6 C457.9 303.6 458.6 315.7 459.9 315.7 C461.4 315.7 462.1 299.9 463.6 299.9 C464.6 299.9 465.1 307.8 466.1 307.8 C467.2 307.8 467.8 297.2 468.9 297.2 C470.6 297.2 471.4 316.8 473.1 316.8 C474.4 316.8 475.0 304.8 476.3 304.8 C477.8 304.8 478.6 314.3 480.2 314.3 C481.2 314.3 481.8 299.7 482.8 299.7 C484.3 299.7 485.1 319.4 486.6 319.4 C487.9 319.4 488.5 299.9 489.8 299.9 C491.4 299.9 492.2 312.6 493.7 312.6 C495.1 312.6 495.8 299.4 497.1 299.4 C498.7 299.4 499.5 304.2 501.1 304.2 C502.1 304.2 502.5 302.5 503.5 302.5 C504.7 302.5 505.3 294.6 506.5 294.6 C507.7 294.6 508.3 310.4 509.5 310.4 C510.5 310.4 510.9 299.9 511.9 299.9 C513.6 299.9 514.4 307.6 516.1 307.6 C517.1 307.6 517.6 300.6 518.6 300.6 C519.9 300.6 520.5 311.9 521.8 311.9 C522.7 311.9 523.1 307.0 524.0 307.0 C525.3 307.0 525.9 314.9 527.2 314.9 C528.3 314.9 528.8 307.6 529.9 307.6 C530.9 307.6 531.5 309.6 532.5 309.6 C533.5 309.6 534.1 306.4 535.1 306.4 C536.3 306.4 536.9 312.3 538.1 312.3 C539.0 312.3 539.5 303.6 540.4 303.6 C541.5 303.6 542.1 308.1 543.2 308.1 C544.5 308.1 545.1 303.1 546.4 303.1 C547.6 303.1 548.2 312.1 549.4 312.1 C550.5 312.1 551.1 304.8 552.2 304.8 C553.2 304.8 553.7 304.2 554.7 304.2 C556.2 304.2 556.9 310.9 558.4 310.9 C559.5 310.9 560.1 298.0 561.2 298.0 C562.8 298.0 563.6 312.6 565.2 312.6 C567.2 312.6 568.2 298.6 570.3 298.6 C571.8 298.6 572.6 310.9 574.2 310.9 C575.1 310.9 575.6 302.2 576.5 302.2 C577.6 302.2 578.2 311.5 579.3 311.5 C580.6 311.5 581.3 302.5 582.7 302.5 C583.8 302.5 584.4 321.1 585.5 321.1 C586.2 321.1 586.6 294.0 587.4 294.0 C588.9 294.0 589.6 309.8 591.1 309.8 C592.5 309.8 593.1 301.4 594.5 301.4 C596.2 301.4 597.0 314.9 598.7 314.9 C600.3 314.9 601.1 298.6 602.7 298.6 C604.4 298.6 605.3 310.4 607.0 310.4 C607.8 310.4 608.2 306.4 609.0 306.4 C610.1 306.4 610.7 313.0 611.8 313.0 C613.2 313.0 613.9 297.2 615.2 297.2 C617.2 297.2 618.1 307.6 620.1 307.6 C621.5 307.6 622.2 304.8 623.7 304.8 C625.0 304.8 625.7 316.4 627.1 316.4 C628.4 316.4 629.1 303.6 630.4 303.6 C631.6 303.6 632.1 313.8 633.3 313.8 C634.5 313.8 635.1 299.7 636.3 299.7 C637.9 299.7 638.7 309.3 640.4 309.3 C641.6 309.3 642.2 300.2 643.4 300.2 C645.2 300.2 646.1 311.5 647.9 311.5 C649.3 311.5 649.9 305.5 651.3 305.5 C652.3 305.5 652.9 312.1 653.9 312.1 C655.1 312.1 655.7 299.1 656.9 299.1 C657.6 299.1 657.9 305.5 658.6 305.5 C659.3 305.5 659.6 302.5 660.3 302.5 C660.9 302.5 661.2 311.5 661.8 311.5 C663.1 311.5 663.8 298.0 665.2 298.0 C667.0 298.0 667.9 313.8 669.7 313.8 C670.9 313.8 671.5 292.7 672.7 292.7 C674.2 292.7 675.0 306.4 676.4 306.4 C677.7 306.4 678.3 299.1 679.5 299.1 C681.0 299.1 681.7 321.7 683.2 321.7 C684.6 321.7 685.4 294.6 686.8 294.6 C688.2 294.6 688.8 313.8 690.2 313.8 C691.1 313.8 691.6 301.7 692.5 301.7 C693.7 301.7 694.2 314.1 695.4 314.1 C697.1 314.1 697.9 297.2 699.6 297.2 C701.4 297.2 702.3 313.2 704.1 313.2 C705.0 313.2 705.4 306.7 706.4 306.7 C707.7 306.7 708.4 319.1 709.7 319.1 C711.1 319.1 711.8 296.5 713.1 296.5 C714.7 296.5 715.5 311.2 717.1 311.2 C718.1 311.2 718.5 297.2 719.5 297.2 C721.2 297.2 722.0 314.3 723.6 314.3 C724.8 314.3 725.4 305.9 726.6 305.9 C727.9 305.9 728.5 316.4 729.7 316.4 C731.3 316.4 732.1 299.9 733.7 299.9 C735.2 299.9 735.9 312.3 737.4 312.3 C738.3 312.3 738.7 298.3 739.6 298.3 C741.2 298.3 742.0 310.9 743.5 310.9 C744.7 310.9 745.2 302.2 746.4 302.2 C748.4 302.2 749.4 309.8 751.4 309.8 C752.1 309.8 752.5 309.3 753.1 309.3 C754.0 309.3 754.5 303.6 755.4 303.6 C757.2 303.6 758.1 312.3 759.9 312.3 C761.9 312.3 762.9 300.6 765.0 300.6 C766.8 300.6 767.7 307.3 769.5 307.3 C771.4 307.3 772.4 302.8 774.3 302.8" fill="none" stroke="#000" stroke-width="2" stroke-linejoin="round"/>
<path d="M39.2 298.6 C40.1 298.6 40.5 304.2 41.4 304.2 C42.5 304.2 43.0 301.0 44.1 301.0 C45.6 301.0 46.4 314.9 47.8 314.9 C49.0 314.9 49.5 303.6 50.7 303.6 C52.1 303.6 52.8 313.2 54.3 313.2 C55.6 313.2 56.3 298.8 57.6 298.8 C59.4 298.8 60.2 316.8 61.9 316.8 C63.1 316.8 63.6 297.2 64.8 297.2 C66.4 297.2 67.3 316.0 68.9 316.0 C70.1 316.0 70.7 299.9 71.8 299.9 C73.1 299.9 73.7 314.3 74.9 314.3 C76.4 314.3 77.1 298.0 78.6 298.0 C80.4 298.0 81.3 313.8 83.1 313.8 C84.1 313.8 84.6 298.3 85.6 298.3 C87.2 298.3 88.0 311.2 89.5 311.2 C91.1 311.2 91.9 302.2 93.5 302.2 C95.1 302.2 95.9 313.8 97.4 313.8 C98.5 313.8 99.0 298.3 100.0 298.3 C101.5 298.3 102.2 316.0 103.6 316.0 C105.0 316.0 105.7 297.4 107.0 297.4 C108.6 297.4 109.4 317.5 111.0 317.5 C112.5 317.5 113.2 293.8 114.7 293.8 C116.1 293.8 116.9 312.6 118.3 312.6 C119.7 312.6 120.3 294.9 121.7 294.9 C123.0 294.9 123.7 317.9 125.1 317.9 C126.6 317.9 127.4 297.2 129.0 297.2 C130.1 297.2 130.7 308.9 131.8 308.9 C133.1 308.9 133.8 292.9 135.1 292.9 C136.6 292.9 137.3 312.3 138.8 312.3 C139.7 312.3 140.1 304.8 141.1 304.8 C142.0 304.8 142.5 309.3 143.5 309.3 C145.0 309.3 145.7 302.5 147.1 302.5 C148.9 302.5 149.8 316.8 151.7 316.8 C152.7 316.8 153.2 300.8 154.2 300.8 C155.4 300.8 155.9 317.1 157.1 317.1 C158.8 317.1 159.6 293.5 161.3 293.5 C162.9 293.5 163.6 307.6 165.2 307.6 C166.5 307.6 167.2 299.4 168.6 299.4 C169.8 299.4 170.5 308.7 171.7 308.7 C172.6 308.7 173.1 307.0 174.0 307.0 C175.5 307.0 176.3 316.0 177.9 316.0 C179.3 316.0 179.9 303.1 181.3 303.1 C182.7 303.1 183.3 313.0 184.7 313.0 C186.0 313.0 186.7 302.5 188.1 302.5 C189.9 302.5 190.8 317.9 192.6 317.9 C193.8 317.9 194.4 304.0 195.6 304.0 C197.1 304.0 197.8 320.2 199.3 320.2 C200.7 320.2 201.4 293.5 202.7 293.5 C204.1 293.5 204.7 314.9 206.1 314.9 C207.5 314.9 208.1 297.6 209.5 297.6 C211.1 297.6 212.0 316.6 213.7 316.6 C214.8 316.6 215.4 294.3 216.6 294.3 C217.8 294.3 218.4 314.9 219.6 314.9 C220.8 314.9 221.3 296.3 222.4 296.3 C223.8 296.3 224.5 304.2 225.8 304.2 C226.5 304.2 226.8 303.6 227.5 303.6 C228.8 303.6 229.5 313.8 230.8 313.8 C232.5 313.8 233.3 297.4 235.1 297.4 C237.2 297.4 238.2 312.3 240.3 312.3 C241.0 312.3 241.4 308.1 242.0 308.1 C243.4 308.1 244.1 315.7 245.4 315.7 C247.2 315.7 248.1 301.0 249.9 301.0 C251.7 301.0 252.6 312.1 254.4 312.1 C256.3 312.1 257.3 300.2 259.2 300.2 C260.4 300.2 261.1 308.1 262.3 308.1 C263.1 308.1 263.5 305.5 264.4 305.5 C265.6 305.5 266.2 309.3 267.4 309.3 C268.9 309.3 269.6 294.0 271.1 294.0 C272.8 294.0 273.6 316.4 275.3 316.4 C276.5 316.4 277.1 301.0 278.3 301.0 C279.8 301.0 280.6 316.0 282.1 316.0 C283.2 316.0 283.8 300.2 284.9 300.2 C286.7 300.2 287.6 316.0 289.4 316.0 C290.4 316.0 290.9 302.8 291.9 302.8 C294.0 302.8 295.1 310.9 297.3 310.9 C298.6 310.9 299.3 301.7 300.7 301.7 C301.6 301.7 302.0 309.3 302.9 309.3 C304.6 309.3 305.5 298.6 307.2 298.6 C308.6 298.6 309.4 310.4 310.8 310.4 C311.9 310.4 312.5 303.6 313.6 303.6 C314.4 303.6 314.8 309.8 315.5 309.8 C316.7 309.8 317.3 301.4 318.5 301.4 C320.0 301.4 320.8 315.5 322.3 315.5 C323.4 315.5 323.9 299.9 325.0 299.9 C326.3 299.9 326.9 310.4 328.1 310.4 C329.6 310.4 330.3 296.5 331.8 296.5 C333.0 296.5 333.6 305.5 334.9 305.5 C335.6 305.5 335.9 305.1 336.6 305.1 C337.3 305.1 337.6 310.9 338.3 310.9 C339.6 310.9 340.2 313.2 341.4 313.2 C343.1 313.2 344.0 299.7 345.6 299.7 C347.1 299.7 347.9 320.0 349.3 320.0 C350.6 320.0 351.2 299.1 352.4 299.1 C353.5 299.1 354.1 314.9 355.2 314.9 C357.1 314.9 358.0 295.7 359.9 295.7 C361.3 295.7 362.0 320.0 363.3 320.0 C365.0 320.0 365.9 301.4 367.6 301.4 C368.7 301.4 369.3 319.7 370.4 319.7 C371.5 319.7 372.0 290.7 373.0 290.7 C374.4 290.7 375.0 308.9 376.4 308.9 C377.8 308.9 378.6 293.5 380.0 293.5 C381.4 293.5 382.2 312.1 383.6 312.1 C384.9 312.1 385.5 304.8 386.8 304.8 C388.4 304.8 389.1 312.3 390.7 312.3 C392.1 312.3 392.7 298.3 394.1 298.3 C395.5 298.3 396.1 314.1 397.5 314.1 C398.6 314.1 399.2 298.6 400.3 298.6 C402.1 298.6 403.0 318.3 404.8 318.3 C405.9 318.3 406.5 299.9 407.6 299.9 C409.2 299.9 410.0 310.4 411.6 310.4 C412.7 310.4 413.3 303.3 414.4 303.3 C415.5 303.3 416.0 310.4 417.1 310.4 C418.4 310.4 419.1 299.9 420.5 299.9 C421.8 299.9 422.5 311.9 423.8 311.9 C425.3 311.9 426.1 297.2 427.6 297.2 C429.4 297.2 430.3 307.8 432.1 307.8 C433.1 307.8 433.7 296.9 434.8 296.9 C436.5 296.9 437.3 317.9 439.1 317.9 C440.5 317.9 441.2 300.2 442.7 300.2 C443.9 300.2 444.6 312.6 445.8 312.6 C447.2 312.6 447.8 292.9 449.2 292.9 C450.6 292.9 451.2 316.0 452.6 316.0 C454.2 316.0 455.0 303.6 456.5 303.6 C457.9 303.6 458.6 315.7 459.9 315.7 C461.4 315.7 462.1 299.9 463.6 299.9 C464.6 299.9 465.1 307.8 466.1 307.8 C467.2 307.8 467.8 297.2 468.9 297.2 C470.6 297.2 471.4 316.8 473.1 316.8 C474.4 316.8 475.0 304.8 476.3 304.8 C477.8 304.8 478.6 314.3 480.2 314.3 C481.2 314.3 481.8 299.7 482.8 299.7 C484.3 299.7 485.1 319.4 486.6 319.4 C487.9 319.4 488.5 299.9 489.8 299.9 C491.4 299.9 492.2 312.6 493.7 312.6 C495.1 312.6 495.8 299.4 497.1 299.4 C498.7 299.4 499.5 304.2 501.1 304.2 C502.1 304.2 502.5 302.5 503.5 302.5 C504.7 302.5 505.3 294.6 506.5 294.6 C507.7 294.6 508.3 310.4 509.5 310.4 C510.5 310.4 510.9 299.9 511.9 299.9 C513.6 299.9 514.4 307.6 516.1 307.6 C517.1 307.6 517.6 300.6 518.6 300.6 C519.9 300.6 520.5 311.9 521.8 311.9 C522.7 311.9 523.1 307.0 524.0 307.0 C525.3 307.0 525.9 314.9 527.2 314.9 C528.3 314.9 528.8 307.6 529.9 307.6 C530.9 307.6 531.5 309.6 532.5 309.6 C533.5 309.6 534.1 306.4 535.1 306.4 C536.3 306.4 536.9 312.3 538.1 312.3 C539.0 312.3 539.5 303.6 540.4 303.6 C541.5 303.6 542.1 308.1 543.2 308.1 C544.5 308.1 545.1 303.1 546.4 303.1 C547.6 303.1 548.2 312.1 549.4 312.1 C550.5 312.1 551.1 304.8 552.2 304.8 C553.2 304.8 553.7 304.2 554.7 304.2 C556.2 304.2 556.9 310.9 558.4 310.9 C559.5 310.9 560.1 298.0 561.2 298.0 C562.8 298.0 563.6 312.6 565.2 312.6 C567.2 312.6 568.2 298.6 570.3 298.6 C571.8 298.6 572.6 310.9 574.2 310.9 C575.1 310.9 575.6 302.2 576.5 302.2 C577.6 302.2 578.2 311.5 579.3 311.5 C580.6 311.5 581.3 302.5 582.7 302.5 C583.8 302.5 584.4 321.1 585.5 321.1 C586.2 321.1 586.6 294.0 587.4 294.0 C588.9 294.0 589.6 309.8 591.1 309.8 C592.5 309.8 593.1 301.4 594.5 301.4 C596.2 301.4 597.0 314.9 598.7 314.9 C600.3 314.9 601.1 298.6 602.7 298.6 C604.4 298.6 605.3 310.4 607.0 310.4 C607.8 310.4 608.2 306.4 609.0 306.4 C610.1 306.4 610.7 313.0 611.8 313.0 C613.2 313.0 613.9 297.2 615.2 297.2 C617.2 297.2 618.1 307.6 620.1 307.6 C621.5 307.6 622.2 304.8 623.7 304.8 C625.0 304.8 625.7 316.4 627.1 316.4 C628.4 316.4 629.1 303.6 630.4 303.6 C631.6 303.6 632.1 313.8 633.3 313.8 C634.5 313.8 635.1 299.7 636.3 299.7 C637.9 299.7 638.7 309.3 640.4 309.3 C641.6 309.3 642.2 300.2 643.4 300.2 C645.2 300.2 646.1 311.5 647.9 311.5 C649.3 311.5 649.9 305.5 651.3 305.5 C652.3 305.5 652.9 312.1 653.9 312.1 C655.1 312.1 655.7 299.1 656.9 299.1 C657.6 299.1 657.9 305.5 658.6 305.5 C659.3 305.5 659.6 302.5 660.3 302.5 C660.9 302.5 661.2 311.5 661.8 311.5 C663.1 311.5 663.8 298.0 665.2 298.0 C667.0 298.0 667.9 313.8 669.7 313.8 C670.9 313.8 671.5 292.7 672.7 292.7 C674.2 292.7 675.0 306.4 676.4 306.4 C677.7 306.4 678.3 299.1 679.5 299.1 C681.0 299.1 681.7 321.7 683.2 321.7 C684.6 321.7 685.4 294.6 686.8 294.6 C688.2 294.6 688.8 313.8 690.2 313.8 C691.1 313.8 691.6 301.7 692.5 301.7 C693.7 301.7 694.2 314.1 695.4 314.1 C697.1 314.1 697.9 297.2 699.6 297.2 C701.4 297.2 702.3 313.2 704.1 313.2 C705.0 313.2 705.4 306.7 706.4 306.7 C707.7 306.7 708.4 319.1 709.7 319.1 C711.1 319.1 711.8 296.5 713.1 296.5 C714.7 296.5 715.5 311.2 717.1 311.2 C718.1 311.2 718.5 297.2 719.5 297.2 C721.2 297.2 722.0 314.3 723.6 314.3 C724.8 314.3 725.4 305.9 726.6 305.9 C727.9 305.9 728.5 316.4 729.7 316.4 C731.3 316.4 732.1 299.9 733.7 299.9 C735.2 299.9 735.9 312.3 737.4 312.3 C738.3 312.3 738.7 298.3 739.6 298.3 C741.2 298.3 742.0 310.9 743.5 310.9 C744.7 310.9 745.2 302.2 746.4 302.2 C748.4 302.2 749.4 309.8 751.4 309.8 C752.1 309.8 752.5 309.3 753.1 309.3 C754.0 309.3 754.5 303.6 755.4 303.6 C757.2 303.6 758.1 312.3 759.9 312.3 C761.9 312.3 762.9 300.6 765.0 300.6 C766.8 300.6 767.7 307.3 769.5 307.3 C771.4 307.3 772.4 302.8 774.3 302.8" fill="none" stroke="#cfc832" stroke-width=".95" stroke-linejoin="round"/>
<!-- spectrum panels -->
<rect x="777.5" y="76" width="182.5" height="307" fill="#000"/>
<rect x="802" y="76" width="127.5" height="141" fill="#222"/>
<rect x="802" y="230" width="127.5" height="140.5" fill="#222"/>
<rect x="837" y="76" width="21" height="141" fill="#666"/>
<rect x="837" y="230" width="21" height="140.5" fill="#666"/>
<rect x="777.5" y="229" width="182.5" height="1" fill="#b8b8b8"/>
<rect x="929.7" y="76" width="1" height="307" fill="#dadada"/>
<rect x="932" y="111" width="26.5" height="118" fill="url(#lv)"/>
<rect x="932" y="251" width="26.5" height="132" fill="url(#lv)"/>
<g stroke="#484848" stroke-width=".8" fill="none"><path d="M799.8 198.3H802M799.8 179.6H802M799.8 160.9H802M799.8 142.2H802M799.8 123.5H802M799.8 104.8H802M804.3 217.0v2M845.6 217.0v2M886.9 217.0v2M799.8 351.8H802M799.8 333.1H802M799.8 314.4H802M799.8 295.7H802M799.8 277.0H802M799.8 258.3H802M804.3 370.5v2M845.6 370.5v2M886.9 370.5v2"/></g>
<rect x="802.78" y="209.50" width="1.25" height="7.50" fill="#828282"/><rect x="805.38" y="203.60" width="1.25" height="13.40" fill="#828282"/><rect x="807.98" y="207.40" width="1.25" height="9.60" fill="#828282"/><rect x="810.58" y="200.10" width="1.25" height="16.90" fill="#828282"/><rect x="813.18" y="209.50" width="1.25" height="7.50" fill="#828282"/><rect x="815.78" y="206.70" width="1.25" height="10.30" fill="#828282"/><rect x="818.38" y="206.40" width="1.25" height="10.60" fill="#828282"/><rect x="820.98" y="205.70" width="1.25" height="11.30" fill="#828282"/><rect x="823.58" y="207.80" width="1.25" height="9.20" fill="#828282"/><rect x="826.18" y="212.70" width="1.25" height="4.30" fill="#828282"/><rect x="828.78" y="212.70" width="1.25" height="4.30" fill="#828282"/><rect x="831.38" y="209.50" width="1.25" height="7.50" fill="#828282"/><rect x="833.98" y="211.60" width="1.25" height="5.40" fill="#828282"/><rect x="836.58" y="209.90" width="1.25" height="7.10" fill="#2b3d5e"/><rect x="839.18" y="210.60" width="1.25" height="6.40" fill="#2b3d5e"/><rect x="841.78" y="212.30" width="1.25" height="4.70" fill="#2b3d5e"/><rect x="844.38" y="212.70" width="1.25" height="4.30" fill="#2b3d5e"/><rect x="846.98" y="196.20" width="1.25" height="20.80" fill="#2b3d5e"/><rect x="849.58" y="208.50" width="1.25" height="8.50" fill="#2b3d5e"/><rect x="852.18" y="212.70" width="1.25" height="4.30" fill="#2b3d5e"/><rect x="854.78" y="212.70" width="1.25" height="4.30" fill="#2b3d5e"/><rect x="857.38" y="216.00" width="1.25" height="1.00" fill="#828282"/><rect x="859.98" y="214.20" width="1.25" height="2.80" fill="#828282"/><rect x="862.58" y="213.80" width="1.25" height="3.20" fill="#828282"/><rect x="865.18" y="215.50" width="1.25" height="1.50" fill="#828282"/><rect x="867.78" y="214.50" width="1.25" height="2.50" fill="#828282"/><rect x="870.38" y="213.50" width="1.25" height="3.50" fill="#828282"/><rect x="872.98" y="213.50" width="1.25" height="3.50" fill="#828282"/><rect x="875.58" y="215.50" width="1.25" height="1.50" fill="#828282"/><rect x="878.18" y="214.50" width="1.25" height="2.50" fill="#828282"/><rect x="880.78" y="215.80" width="1.25" height="1.20" fill="#828282"/><rect x="883.38" y="215.50" width="1.25" height="1.50" fill="#828282"/><rect x="885.98" y="214.50" width="1.25" height="2.50" fill="#828282"/><rect x="888.58" y="215.20" width="1.25" height="1.80" fill="#828282"/><rect x="891.18" y="215.70" width="1.25" height="1.30" fill="#828282"/><rect x="893.78" y="215.70" width="1.25" height="1.30" fill="#828282"/><rect x="896.38" y="215.70" width="1.25" height="1.30" fill="#828282"/><rect x="898.98" y="215.50" width="1.25" height="1.50" fill="#828282"/><rect x="901.58" y="214.80" width="1.25" height="2.20" fill="#828282"/><rect x="904.18" y="215.50" width="1.25" height="1.50" fill="#828282"/><rect x="906.78" y="215.80" width="1.25" height="1.20" fill="#828282"/><rect x="909.38" y="215.80" width="1.25" height="1.20" fill="#828282"/><rect x="911.98" y="215.80" width="1.25" height="1.20" fill="#828282"/><rect x="914.58" y="215.80" width="1.25" height="1.20" fill="#828282"/><rect x="917.18" y="215.80" width="1.25" height="1.20" fill="#828282"/><rect x="919.78" y="215.80" width="1.25" height="1.20" fill="#828282"/><rect x="922.38" y="215.80" width="1.25" height="1.20" fill="#828282"/><rect x="924.98" y="216.00" width="1.25" height="1.00" fill="#828282"/><rect x="927.58" y="216.00" width="1.25" height="1.00" fill="#828282"/>
<rect x="802.78" y="368.30" width="1.25" height="2.20" fill="#828282"/><rect x="805.38" y="365.10" width="1.25" height="5.40" fill="#828282"/><rect x="807.98" y="366.90" width="1.25" height="3.60" fill="#828282"/><rect x="810.58" y="367.20" width="1.25" height="3.30" fill="#828282"/><rect x="813.18" y="366.20" width="1.25" height="4.30" fill="#828282"/><rect x="815.78" y="365.80" width="1.25" height="4.70" fill="#828282"/><rect x="818.38" y="364.80" width="1.25" height="5.70" fill="#828282"/><rect x="820.98" y="367.20" width="1.25" height="3.30" fill="#828282"/><rect x="823.58" y="362.70" width="1.25" height="7.80" fill="#828282"/><rect x="826.18" y="367.20" width="1.25" height="3.30" fill="#828282"/><rect x="828.78" y="365.80" width="1.25" height="4.70" fill="#828282"/><rect x="831.38" y="363.70" width="1.25" height="6.80" fill="#828282"/><rect x="833.98" y="367.20" width="1.25" height="3.30" fill="#828282"/><rect x="836.58" y="365.80" width="1.25" height="4.70" fill="#2b3d5e"/><rect x="839.18" y="365.10" width="1.25" height="5.40" fill="#2b3d5e"/><rect x="841.78" y="363.70" width="1.25" height="6.80" fill="#2b3d5e"/><rect x="844.38" y="364.80" width="1.25" height="5.70" fill="#2b3d5e"/><rect x="846.98" y="344.10" width="1.25" height="26.40" fill="#2b3d5e"/><rect x="849.58" y="362.00" width="1.25" height="8.50" fill="#2b3d5e"/><rect x="852.18" y="364.80" width="1.25" height="5.70" fill="#2b3d5e"/><rect x="854.78" y="365.10" width="1.25" height="5.40" fill="#2b3d5e"/><rect x="857.38" y="368.30" width="1.25" height="2.20" fill="#828282"/><rect x="859.98" y="364.10" width="1.25" height="6.40" fill="#828282"/><rect x="862.58" y="366.90" width="1.25" height="3.60" fill="#828282"/><rect x="865.18" y="367.30" width="1.25" height="3.20" fill="#828282"/><rect x="867.78" y="368.10" width="1.25" height="2.40" fill="#828282"/><rect x="870.38" y="366.90" width="1.25" height="3.60" fill="#828282"/><rect x="872.98" y="368.10" width="1.25" height="2.40" fill="#828282"/><rect x="875.58" y="367.30" width="1.25" height="3.20" fill="#828282"/><rect x="878.18" y="366.90" width="1.25" height="3.60" fill="#828282"/><rect x="880.78" y="367.70" width="1.25" height="2.80" fill="#828282"/><rect x="883.38" y="367.90" width="1.25" height="2.60" fill="#828282"/><rect x="885.98" y="368.10" width="1.25" height="2.40" fill="#828282"/><rect x="888.58" y="368.90" width="1.25" height="1.60" fill="#828282"/><rect x="891.18" y="368.30" width="1.25" height="2.20" fill="#828282"/><rect x="893.78" y="368.10" width="1.25" height="2.40" fill="#828282"/><rect x="896.38" y="368.30" width="1.25" height="2.20" fill="#828282"/><rect x="898.98" y="369.10" width="1.25" height="1.40" fill="#828282"/><rect x="901.58" y="369.10" width="1.25" height="1.40" fill="#828282"/><rect x="904.18" y="368.90" width="1.25" height="1.60" fill="#828282"/><rect x="906.78" y="369.10" width="1.25" height="1.40" fill="#828282"/><rect x="909.38" y="369.10" width="1.25" height="1.40" fill="#828282"/><rect x="911.98" y="368.90" width="1.25" height="1.60" fill="#828282"/><rect x="914.58" y="369.10" width="1.25" height="1.40" fill="#828282"/><rect x="917.18" y="369.10" width="1.25" height="1.40" fill="#828282"/><rect x="919.78" y="369.10" width="1.25" height="1.40" fill="#828282"/><rect x="922.38" y="369.50" width="1.25" height="1.00" fill="#828282"/><rect x="924.98" y="369.70" width="1.25" height="0.80" fill="#828282"/><rect x="927.58" y="369.70" width="1.25" height="0.80" fill="#828282"/>
<!-- chart 3 -->
<rect x="13" y="386.2" width="947.3" height="133.4" fill="#000"/>
<rect x="39" y="386.2" width="921.3" height="133.4" fill="#0b0b0b"/>
<rect x="38" y="386.2" width="1" height="133.4" fill="#4a4a4a"/>
<g stroke="#2b2b2b" stroke-width="1" stroke-dasharray="1.5 1.6" fill="none">
<path d="M131.0 386.2V519.6M223.2 386.2V519.6M315.3 386.2V519.6M407.5 386.2V519.6M499.6 386.2V519.6M591.7 386.2V519.6M683.8 386.2V519.6M776.0 386.2V519.6M868.1 386.2V519.6M960.0 386.2V519.6"/>
<path stroke="#272727" d="M39 429.1H960M39 459.2H960M39 489.4H960"/>
</g>
<rect x="38.5" y="398.35" width="921.8" height="1" fill="#a98fa8"/>
<!-- big bar -->
<rect x="963.5" y="72.5" width="24.5" height="447" fill="url(#big)"/>
</svg>

<!-- chart labels -->
<div class="lab" style="left:13px;width:20.3px;top:76.2px">100</div>
<div class="lab" style="left:13px;width:20.3px;top:112.1px">50</div>
<div class="lab" style="left:13px;width:20.3px;top:150.0px">0</div>
<div class="lab" style="left:13px;width:20.3px;top:188.6px">-50</div>
<div class="lab" style="left:13px;width:20.3px;top:223.1px">-100</div>
<div class="lab" style="left:13px;width:20.3px;top:230.9px">100</div>
<div class="lab" style="left:13px;width:20.3px;top:265.6px">50</div>
<div class="lab" style="left:13px;width:20.3px;top:303.5px">0</div>
<div class="lab" style="left:13px;width:20.3px;top:342.1px">-50</div>
<div class="lab" style="left:13px;width:20.3px;top:377.3px">-100</div>
<div class="lab" style="left:13px;width:20.3px;top:396.3px">100</div>
<div class="lab" style="left:13px;width:20.3px;top:426.5px">75</div>
<div class="lab" style="left:13px;width:20.3px;top:456.5px">50</div>
<div class="lab" style="left:13px;width:20.3px;top:486.5px">25</div>
<div class="lab" style="left:13px;width:20.3px;top:513.8px">0</div>
<div class="ctitle" style="left:44.3px;top:80.9px">O1-T3 - ЭЭГ (Альфа-ритм) Левое полушарие мозга</div>
<div class="ctitle" style="left:44.3px;top:235.1px">O2-T4 - ЭЭГ (Альфа-ритм) Правое полушарие мозга</div>
<div class="ctitle" style="left:44.4px;top:391.8px">Канал 1</div>
<div class="btn" style="left:695px;top:78px;width:37px">100 мкВ</div>
<div class="btn" style="left:741px;top:78px;width:31px">10 с</div>
<div class="btn" style="left:695px;top:232px;width:37px">100 мкВ</div>
<div class="btn" style="left:741px;top:232px;width:31px">10 с</div>
<div class="btn" style="left:881px;top:388.6px;width:36.5px">110 %</div>
<div class="btn" style="left:927px;top:388.6px;width:31px">60 с</div>

<!-- spectrum labels -->
<div class="lab" style="left:780px;width:20px;top:77.7px;font-size:5.3px">мкВ</div>
<div class="lab" style="left:780px;width:17.8px;top:101px">12</div>
<div class="lab" style="left:780px;width:17.8px;top:120.5px">10</div>
<div class="lab" style="left:780px;width:17.8px;top:139.5px">8</div>
<div class="lab" style="left:780px;width:17.8px;top:157.5px">6</div>
<div class="lab" style="left:780px;width:17.8px;top:176px">4</div>
<div class="lab" style="left:780px;width:17.8px;top:195px">2</div>
<div class="lab" style="left:780px;width:17.8px;top:210px">0</div>
<div class="lab" style="left:780px;width:20px;top:231.7px;font-size:5.3px">мкВ</div>
<div class="lab" style="left:780px;width:17.8px;top:255px">12</div>
<div class="lab" style="left:780px;width:17.8px;top:274.5px">10</div>
<div class="lab" style="left:780px;width:17.8px;top:293px">8</div>
<div class="lab" style="left:780px;width:17.8px;top:311.5px">6</div>
<div class="lab" style="left:780px;width:17.8px;top:330px">4</div>
<div class="lab" style="left:780px;width:17.8px;top:349px">2</div>
<div class="lab" style="left:780px;width:17.8px;top:364px">0</div>
<div class="lab" style="left:805.5px;top:77.5px;font-size:4.8px;font-style:italic;text-align:left">Альфа-ритм</div>
<div class="lab" style="left:805.5px;top:231.5px;font-size:4.8px;font-style:italic;text-align:left">Альфа-ритм</div>
<div class="lab" style="left:845.5px;top:85.5px;font-size:5px;text-align:left;font-weight:bold">α</div>
<div class="lab" style="left:845.5px;top:239.5px;font-size:5px;text-align:left;font-weight:bold">α</div>
<div class="lab" style="left:803px;top:220.9px;text-align:left">0</div>
<div class="lab" style="left:842.5px;top:220.9px;text-align:left">10</div>
<div class="lab" style="left:884px;top:220.9px;text-align:left">20</div>
<div class="lab" style="left:913.5px;top:220.9px;text-align:left">30 Гц</div>
<div class="lab" style="left:803px;top:374.6px;text-align:left">0</div>
<div class="lab" style="left:842.5px;top:374.6px;text-align:left">10</div>
<div class="lab" style="left:884px;top:374.6px;text-align:left">20</div>
<div class="lab" style="left:913.5px;top:374.6px;text-align:left">30 Гц</div>

<!-- status bar -->
<div id="status"></div>
<div class="t" style="left:10px;top:523.6px;font-size:6.05px;color:#111">Пациент : Авдашков С.В.</div>
<div class="t" style="left:164px;top:523.6px;font-size:6.05px;color:#111">Тренинг : Одиночный тренинг</div>
<div class="t" style="left:369px;top:523.6px;font-size:6.05px;color:#111">Соединение установлено (BrainBit)</div>
<div class="abs" style="left:673px;top:523px;width:1px;height:9px;background:#dedede"></div><div class="abs" style="left:545px;top:523px;width:1px;height:9px;background:#dedede"></div>
</div></body></html>
